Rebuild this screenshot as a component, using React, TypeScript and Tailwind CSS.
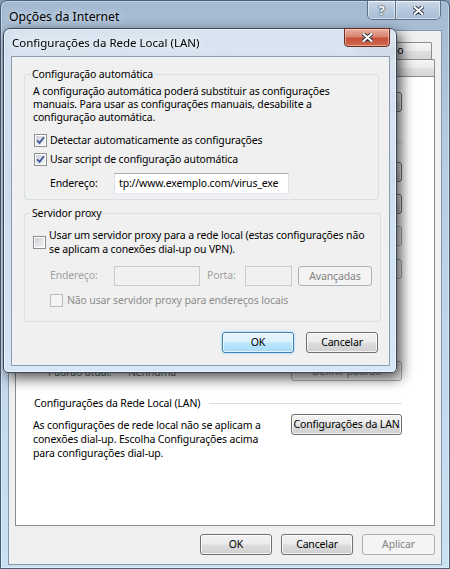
import React from "react";

const font = "font-['Noto_Sans','Open_Sans',sans-serif]";

type Variant = "normal" | "default" | "disabled";

function Button({ children, className = "", variant = "normal" }: { children?: React.ReactNode; className?: string; variant?: Variant }) {
  const look = {
    normal:
      "border-[#707070] bg-[linear-gradient(#f2f2f2,#ebebeb_48%,#dddddd_52%,#cfcfcf)] text-black shadow-[inset_0_0_0_1px_rgba(255,255,255,0.75)]",
    default:
      "border-[#3c7fb1] bg-[linear-gradient(#eaf6fd,#d9f0fc_48%,#bee6fd_52%,#a7d9f5)] text-black shadow-[inset_0_0_0_1px_rgba(255,255,255,0.7),0_0_3px_#8fd0f8]",
    disabled: "border-[#adb2b5] bg-[#f4f4f4] text-[#838383]",
  }[variant];
  return (
    <button type="button" className={`flex shrink-0 items-center justify-center whitespace-nowrap rounded-[3px] border leading-none ${look} ${className}`}>
      {children}
    </button>
  );
}

function CheckBox({ checked = false, disabled = false }: { checked?: boolean; disabled?: boolean }) {
  return (
    <span
      className={`flex h-[13px] w-[13px] shrink-0 items-center justify-center border p-[1px] ${
        disabled ? "border-[#bcbcbc] bg-[#f4f4f4]" : "border-[#8e8f8f] bg-white"
      }`}
    >
      <span
        className={`flex h-full w-full items-center justify-center ${
          disabled ? "bg-[#f4f4f4]" : "bg-[linear-gradient(135deg,#cbcfd5,#f7f7f7)]"
        }`}
      >
        {checked && (
          <svg width="9" height="9" viewBox="0 0 9 9">
            <path d="M1.2 4.4 3.6 6.9 7.9 1.3" fill="none" stroke="#40589a" strokeWidth="1.8" />
          </svg>
        )}
      </span>
    </span>
  );
}

function TextBox({ value = "", disabled = false, className = "" }: { value?: string; disabled?: boolean; className?: string }) {
  return (
    <div
      className={`flex shrink-0 items-center overflow-hidden whitespace-nowrap border px-[4px] ${
        disabled ? "border-[#c9cacf] bg-[#f0f0f0]" : "border-[#abadb3] border-x-[#dbdfe6] border-b-[#e3e9ef] bg-white"
      } ${className}`}
    >
      {value}
    </div>
  );
}

function Tab({ label = "", selected = false }: { label?: string; selected?: boolean }) {
  return (
    <div
      className={`-ml-px flex flex-1 items-center justify-center rounded-t-[2px] border border-b-0 border-[#898c95] first:ml-0 ${
        selected ? "relative -mb-px bg-white" : "bg-[linear-gradient(#f6f6f6,#ececec_50%,#e0e0e0_52%,#d6d6d6)]"
      }`}
    >
      {label}
    </div>
  );
}

function CaptionButton({ children, className = "" }: { children: React.ReactNode; className?: string }) {
  return (
    <div
      className={`flex h-[20px] items-center justify-center border border-[#5d6e84] bg-[linear-gradient(rgba(255,255,255,0.45),rgba(210,224,240,0.35)_50%,rgba(170,192,218,0.4))] shadow-[inset_0_0_0_1px_rgba(255,255,255,0.5)] ${className}`}
    >
      {children}
    </div>
  );
}

function XGlyph() {
  return (
    <svg width="11" height="9" viewBox="0 0 11 9">
      <path d="M1.5 1 9.5 8M9.5 1 1.5 8" stroke="#2b3340" strokeWidth="4" strokeLinecap="round" />
      <path d="M1.5 1 9.5 8M9.5 1 1.5 8" stroke="#ffffff" strokeWidth="2.2" strokeLinecap="round" />
    </svg>
  );
}

export default function App() {
  return (
    <div className={`relative h-[569px] w-[450px] overflow-hidden bg-[#7f9bb8] text-[10.5px] tracking-[-0.15px] text-black ${font}`}>
      {/* Janela de fundo: Opções da Internet */}
      <div className="flex h-full flex-col rounded-t-[7px] border border-[#4a5e75] bg-[linear-gradient(180deg,#a4bad2,#b9cde2_30%,#c4d9ee_70%,#c9e2f3)] px-[7px] pb-[3px] shadow-[inset_0_0_0_1px_rgba(255,255,255,0.35)]">
        <div className="flex h-[29px] shrink-0 items-start justify-between">
          <span className="ml-[1px] mt-[8px] text-[12.2px] leading-[16px] tracking-normal [text-shadow:0_0_6px_rgba(255,255,255,0.9)]">
            Opções da Internet
          </span>
          <div className="-mt-px mr-px flex overflow-hidden rounded-b-[5px]">
            <CaptionButton className="w-[29px] rounded-bl-[5px]">
              <span className="text-[13px] font-bold leading-none text-white [text-shadow:0_0_2px_#1f2a38,0_0_1px_#1f2a38]">?</span>
            </CaptionButton>
            <CaptionButton className="-ml-px w-[46px] rounded-br-[5px]">
              <XGlyph />
            </CaptionButton>
          </div>
        </div>

        <div className="flex flex-1 flex-col border border-[#8598ad] bg-[#f0f0f0] px-[6px] pb-[9px] pt-[11px]">
          {/* abas (duas fileiras); só a ponta direita aparece ao lado do diálogo */}
          <div className="flex h-[17px] shrink-0 px-[3px]">
            <Tab />
            <Tab />
            <Tab />
            <Tab label="Conteúdo" />
          </div>
          <div className="flex h-[17px] shrink-0">
            <Tab selected />
            <Tab />
            <Tab />
          </div>

          {/* página Conexões — a parte de cima fica coberta pelo diálogo */}
          <div className="flex flex-1 flex-col border border-[#898c95] bg-white pl-[17px] pr-[32px] pt-[15px]">
            <div className="flex h-[20px] items-center justify-end">
              <Button className="h-[20px] w-[111px]" />
            </div>

            <div className="mt-[24px] flex h-[13px] items-center">
              <span className="ml-[280px] h-px flex-1 bg-[#d5dfe5]" />
            </div>

            <div className="mt-[13px] flex justify-between">
              <div className="h-[84px] w-[240px] border border-[#828790] bg-white" />
              <div className="flex flex-col gap-[12px]">
                <Button className="h-[20px] w-[111px]" />
                <Button className="h-[20px] w-[111px]" />
                <Button variant="disabled" className="h-[20px] w-[111px]" />
              </div>
            </div>

            <div className="mt-[13px] flex h-[20px] items-center justify-end">
              <Button variant="disabled" className="h-[20px] w-[111px]" />
            </div>

            <div className="mt-[12px] h-[57px]" />

            <div className="mt-[13px] flex h-[20px] items-center justify-between text-[#6d6d6d]">
              <div className="ml-[15px] mt-[4px] flex">
                <span className="w-[80px]">Padrão atual:</span>
                <span>Nenhuma</span>
              </div>
              <Button variant="disabled" className="h-[20px] w-[111px]">
                Definir padrão
              </Button>
            </div>

            <div className="mt-[16px] flex h-[13px] items-center leading-[13px]">
              <span className="ml-[1px]">Configurações da Rede Local (LAN)</span>
              <span className="ml-[9px] h-px flex-1 bg-[#d5dfe5]" />
            </div>

            <div className="mt-[4px] flex items-start justify-between">
              <p className="mt-[4px] leading-[14px]">
                As configurações de rede local não se aplicam a
                <br />
                conexões dial-up. Escolha Configurações acima
                <br />
                para configurações dial-up.
              </p>
              <Button className="h-[21px] w-[111px]">Configurações da LAN</Button>
            </div>
          </div>

          <div className="mt-[8px] flex shrink-0 justify-end gap-[9px]">
            <Button className="h-[21px] w-[72px]">OK</Button>
            <Button className="h-[21px] w-[72px]">Cancelar</Button>
            <Button variant="disabled" className="h-[21px] w-[73px]">
              Aplicar
            </Button>
          </div>
        </div>
      </div>

      {/* Diálogo: Configurações da Rede Local (LAN) */}
      <div className="absolute left-[3px] top-[28px] z-20 flex h-[345px] w-[394px] flex-col rounded-b-[5px] rounded-t-[7px] border border-[#34475d] bg-[linear-gradient(180deg,rgba(216,228,241,0.84),rgba(204,221,239,0.9)_45%,rgba(214,230,246,0.94))] pb-[6px] pl-[7px] pr-[6px] shadow-[inset_0_0_0_1px_rgba(255,255,255,0.6),4px_5px_14px_rgba(0,0,0,0.7)] backdrop-blur-[3px]">
        <div className="flex h-[27px] shrink-0 items-start justify-between">
          <span className="ml-[1px] mt-[6px] text-[11.5px] leading-[16px] tracking-normal [text-shadow:0_0_6px_rgba(255,255,255,0.9)]">
            Configurações da Rede Local (LAN)
          </span>
          <div className="-mt-px flex h-[19px] w-[46px] items-center justify-center rounded-b-[4px] border border-[#6a2a22] bg-[linear-gradient(#eab0a0,#d88470_45%,#c7503c_55%,#cf6a4c)] shadow-[inset_0_0_0_1px_rgba(255,230,220,0.5)]">
            <XGlyph />
          </div>
        </div>

        <div className="flex flex-1 flex-col border border-[#8c9bb0] bg-[#f0f0f0] pl-[12px] pr-[10px] pt-[11px]">
          <fieldset className="rounded-[3px] border border-[#d5dfe5] px-[8px] pb-[5px]">
            <legend className="-ml-[2px] px-[1px] leading-[13px]">Configuração automática</legend>
            <p className="mt-[4px] leading-[13px]">
              A configuração automática poderá substituir as configurações
              <br />
              manuais. Para usar as configurações manuais, desabilite a
              <br />
              configuração automática.
            </p>
            <label className="ml-[1px] mt-[10px] flex h-[13px] items-center gap-[3px] leading-[13px]">
              <CheckBox checked />
              <span>Detectar automaticamente as configurações</span>
            </label>
            <label className="ml-[1px] mt-[6px] flex h-[13px] items-center gap-[3px] leading-[13px]">
              <CheckBox checked />
              <span>Usar script de configuração automática</span>
            </label>
            <div className="mt-[7px] flex items-center">
              <span className="ml-[17px] w-[64px]">Endereço:</span>
              <TextBox value="tp://www.exemplo.com/virus_exe" className="h-[21px] w-[175px]" />
            </div>
          </fieldset>

          <fieldset className="mt-[7px] rounded-[3px] border border-[#d5dfe5] px-[8px] pb-[14px]">
            <legend className="-ml-[2px] px-[1px] leading-[13px]">Servidor proxy</legend>
            <label className="mt-[8px] flex items-center gap-[3px] whitespace-nowrap leading-[14px]">
              <CheckBox />
              <span>
                Usar um servidor proxy para a rede local (estas configurações não
                <br />
                se aplicam a conexões dial-up ou VPN).
              </span>
            </label>
            <div className="mt-[10px] flex items-center text-[#a0a0a0]">
              <span className="ml-[17px] w-[64px]">Endereço:</span>
              <TextBox disabled className="h-[20px] w-[86px]" />
              <span className="ml-[7px] w-[38px]">Porta:</span>
              <TextBox disabled className="h-[20px] w-[47px]" />
              <Button variant="disabled" className="ml-[6px] h-[20px] w-[74px]">
                Avançadas
              </Button>
            </div>
            <label className="ml-[17px] mt-[8px] flex h-[13px] items-center gap-[4px] leading-[13px] text-[#8d8d8d]">
              <CheckBox disabled />
              <span>Não usar servidor proxy para endereços locais</span>
            </label>
          </fieldset>

          <div className="mr-[1px] mt-[10px] flex justify-end gap-[12px]">
            <Button variant="default" className="h-[21px] w-[72px]">
              OK
            </Button>
            <Button className="h-[21px] w-[72px]">Cancelar</Button>
          </div>
        </div>
      </div>
    </div>
  );
}
